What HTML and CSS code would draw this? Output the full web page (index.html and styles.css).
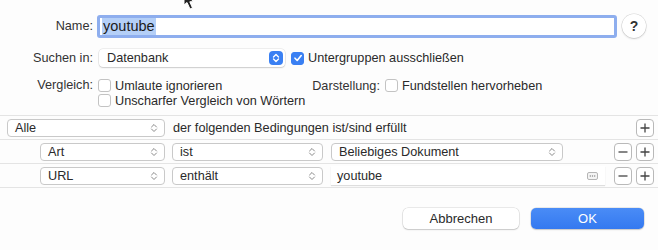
FILE: index.html
```html
<!DOCTYPE html>
<html lang="de">
<head>
  <meta charset="UTF-8" />
  <title>Intelligente Gruppe</title>
  <link rel="stylesheet" href="styles.css">
</head>
<body>
  <svg class="cursor" width="18" height="12" viewBox="0 0 18 12" aria-hidden="true">
    <path d="M2 -6 L2 5 L5 2.5 L8 9 L10.5 8 L7.8 1.8 L12 1.6 Z" fill="#222" stroke="#fff" stroke-width="1"/>
  </svg>

  <main class="sheet">
    <div class="form">
      <div class="row row-name">
        <span class="lbl">Name:</span>
        <div class="field focus"><span class="sel">youtube</span></div>
        <button class="help">?</button>
      </div>

      <div class="row row-scope">
        <span class="lbl">Suchen in:</span>
        <div class="popup popup-db">
          <span>Datenbank</span>
          <span class="stepper">
            <svg width="8" height="10" viewBox="0 0 8 10"><path d="M1.5 4 L4 1.5 L6.5 4 M1.5 6 L4 8.5 L6.5 6" fill="none" stroke="#fff" stroke-width="1.4" stroke-linecap="round" stroke-linejoin="round"/></svg>
          </span>
        </div>
        <label class="check">
          <span class="box on">
            <svg width="10" height="10" viewBox="0 0 10 10"><path d="M2 5.2 L4.2 7.5 L8.2 2.5" fill="none" stroke="#fff" stroke-width="1.6" stroke-linecap="round" stroke-linejoin="round"/></svg>
          </span>
          Untergruppen ausschließen
        </label>
      </div>

      <div class="row row-opts">
        <span class="lbl">Vergleich:</span>
        <div class="opts">
          <div class="opts-line">
            <label class="check"><span class="box"></span>Umlaute ignorieren</label>
            <span class="lbl-inline">Darstellung:</span>
            <label class="check"><span class="box"></span>Fundstellen hervorheben</label>
          </div>
          <label class="check"><span class="box"></span>Unscharfer Vergleich von Wörtern</label>
        </div>
      </div>
    </div>

    <section class="rules">
      <div class="rule">
        <div class="popup w-all"><span>Alle</span><svg class="chev" width="8" height="10" viewBox="0 0 8 10"><path d="M1.5 4 L4 1.5 L6.5 4 M1.5 6 L4 8.5 L6.5 6" fill="none" stroke="#8a8a8a" stroke-width="1" stroke-linecap="round" stroke-linejoin="round"/></svg></div>
        <span class="rule-text">der folgenden Bedingungen ist/sind erfüllt</span>
        <div class="tools">
          <button class="sq"><svg width="12" height="12" viewBox="0 0 12 12"><path d="M6 1.5 V10.5 M1.5 6 H10.5" stroke="#444" stroke-width="1.3"/></svg></button>
        </div>
      </div>

      <div class="rule nested">
        <div class="popup w-key"><span>Art</span><svg class="chev" width="8" height="10" viewBox="0 0 8 10"><path d="M1.5 4 L4 1.5 L6.5 4 M1.5 6 L4 8.5 L6.5 6" fill="none" stroke="#8a8a8a" stroke-width="1" stroke-linecap="round" stroke-linejoin="round"/></svg></div>
        <div class="popup w-op"><span>ist</span><svg class="chev" width="8" height="10" viewBox="0 0 8 10"><path d="M1.5 4 L4 1.5 L6.5 4 M1.5 6 L4 8.5 L6.5 6" fill="none" stroke="#8a8a8a" stroke-width="1" stroke-linecap="round" stroke-linejoin="round"/></svg></div>
        <div class="popup w-val"><span>Beliebiges Dokument</span><svg class="chev" width="8" height="10" viewBox="0 0 8 10"><path d="M1.5 4 L4 1.5 L6.5 4 M1.5 6 L4 8.5 L6.5 6" fill="none" stroke="#8a8a8a" stroke-width="1" stroke-linecap="round" stroke-linejoin="round"/></svg></div>
        <div class="tools">
          <button class="sq"><svg width="12" height="12" viewBox="0 0 12 12"><path d="M1.5 6 H10.5" stroke="#444" stroke-width="1.3"/></svg></button>
          <button class="sq"><svg width="12" height="12" viewBox="0 0 12 12"><path d="M6 1.5 V10.5 M1.5 6 H10.5" stroke="#444" stroke-width="1.3"/></svg></button>
        </div>
      </div>

      <div class="rule nested">
        <div class="popup w-key"><span>URL</span><svg class="chev" width="8" height="10" viewBox="0 0 8 10"><path d="M1.5 4 L4 1.5 L6.5 4 M1.5 6 L4 8.5 L6.5 6" fill="none" stroke="#8a8a8a" stroke-width="1" stroke-linecap="round" stroke-linejoin="round"/></svg></div>
        <div class="popup w-op"><span>enthält</span><svg class="chev" width="8" height="10" viewBox="0 0 8 10"><path d="M1.5 4 L4 1.5 L6.5 4 M1.5 6 L4 8.5 L6.5 6" fill="none" stroke="#8a8a8a" stroke-width="1" stroke-linecap="round" stroke-linejoin="round"/></svg></div>
        <div class="textbox">
          <span>youtube</span>
          <svg class="more" width="11" height="8" viewBox="0 0 11 8"><rect x="0.5" y="0.5" width="10" height="7" rx="1.5" fill="#f4f4f4" stroke="#b5b5b5"/><circle cx="3.3" cy="4" r="0.7" fill="#888"/><circle cx="5.5" cy="4" r="0.7" fill="#888"/><circle cx="7.7" cy="4" r="0.7" fill="#888"/></svg>
        </div>
        <div class="tools">
          <button class="sq"><svg width="12" height="12" viewBox="0 0 12 12"><path d="M1.5 6 H10.5" stroke="#444" stroke-width="1.3"/></svg></button>
          <button class="sq"><svg width="12" height="12" viewBox="0 0 12 12"><path d="M6 1.5 V10.5 M1.5 6 H10.5" stroke="#444" stroke-width="1.3"/></svg></button>
        </div>
      </div>
    </section>

    <div class="actions">
      <button class="btn">Abbrechen</button>
      <button class="btn primary">OK</button>
    </div>
  </main>
</body>
</html>
```

FILE: styles.css
```css
body {
  margin: 0;
  background: #fdfdfd;
  font-family: "Liberation Sans", Arial, sans-serif;
  font-size: 12.7px;
  color: #2a2a2a;
  width: 658px;
  height: 250px;
  overflow: hidden;
}
.cursor {
  position: absolute;
  top: 0;
  left: 182px;
}
.sheet {
  display: flex;
  flex-direction: column;
}
.form {
  padding-top: 14px;
  display: flex;
  flex-direction: column;
}
.row {
  display: flex;
  align-items: center;
}
.lbl {
  width: 93px;
  text-align: right;
  color: #333;
  flex: none;
}
/* Name */
.row-name {
  height: 24px;
}
.field {
  margin-left: 4px;
  width: 512px;
  height: 17px;
  background: #fff;
  display: flex;
  align-items: center;
  padding-left: 2px;
}
.field.focus {
  border: 3px solid #8eaeee;
  border-radius: 3px;
}
.sel {
  background: #b4cff7;
  font-size: 14.5px;
  line-height: 17px;
  padding: 0 1px 0 1px;
  color: #1b1b1b;
}
.help {
  margin-left: 5px;
  width: 24px;
  height: 24px;
  border-radius: 50%;
  border: none;
  background: #fff;
  box-shadow: 0 0 0 0.5px rgba(0,0,0,0.15), 0 1px 2px rgba(0,0,0,0.15);
  font-family: "Liberation Sans", Arial, sans-serif;
  font-size: 14px;
  font-weight: bold;
  color: #333;
  padding: 0;
}
/* Suchen in */
.row-scope {
  margin-top: 10px;
  height: 20px;
}
.popup {
  height: 18px;
  box-sizing: border-box;
  background: #fff;
  border: 1px solid #c9c9c9;
  border-radius: 4px;
  display: flex;
  align-items: center;
  justify-content: space-between;
  padding: 0 6px 0 7px;
  color: #2a2a2a;
  flex: none;
}
.popup-db {
  margin-left: 6px;
  width: 186px;
  border: none;
  box-shadow: 0 0 0 0.5px rgba(0,0,0,0.12), 0 1px 1.5px rgba(0,0,0,0.14);
  padding: 0 2px 0 8px;
}
.stepper {
  width: 14px;
  height: 14px;
  border-radius: 4px;
  background: #3a80f3;
  display: flex;
  align-items: center;
  justify-content: center;
}
.check {
  display: flex;
  align-items: center;
  gap: 4px;
  color: #2a2a2a;
  white-space: nowrap;
}
.box {
  width: 13px;
  height: 13px;
  box-sizing: border-box;
  border: 1px solid #c3c3c3;
  border-radius: 3px;
  background: #fff;
  display: flex;
  align-items: center;
  justify-content: center;
}
.box.on {
  background: #3a80f3;
  border-color: #3a80f3;
}
.row-scope .check {
  margin-left: 6px;
}
/* Vergleich */
.row-opts {
  margin-top: 10px;
  align-items: flex-start;
}
.row-opts .lbl {
  line-height: 15px;
}
.opts {
  margin-left: 5px;
  display: flex;
  flex-direction: column;
}
.opts .check {
  height: 15px;
}
.opts-line {
  display: flex;
  align-items: center;
}
.lbl-inline {
  margin-left: 90px;
  margin-right: 5px;
  color: #333;
}
/* Regeln */
.rules {
  margin-top: 7px;
  border-top: 1px solid #e4e4e4;
}
.rule {
  height: 23px;
  border-bottom: 1px solid #e4e4e4;
  display: flex;
  align-items: center;
  padding: 0 4px 0 7px;
  gap: 7px;
}
.rule.nested {
  padding-left: 40px;
}
.w-all { width: 158px; }
.w-key { width: 125px; }
.w-op { width: 151px; margin-left: 0; }
.w-val { width: 232px; margin-left: 1px; }
.chev {
  flex: none;
}
.rule-text {
  margin-left: 1px;
  color: #2a2a2a;
}
.textbox {
  margin-left: 1px;
  width: 274px;
  height: 19px;
  box-sizing: border-box;
  background: #fff;
  box-shadow: 0 1px 1px rgba(0,0,0,0.12);
  display: flex;
  align-items: center;
  justify-content: space-between;
  padding: 0 7px 0 6px;
}
.tools {
  margin-left: auto;
  display: flex;
  gap: 4px;
}
.sq {
  width: 18px;
  height: 18px;
  padding: 0;
  border: 1px solid #b9b9b9;
  border-radius: 4px;
  background: #fff;
  display: flex;
  align-items: center;
  justify-content: center;
}
/* Buttons */
.actions {
  display: flex;
  justify-content: flex-end;
  gap: 12px;
  padding: 20px 14px 0 0;
}
.btn {
  width: 116px;
  height: 21px;
  border: none;
  border-radius: 5px;
  background: #fff;
  box-shadow: 0 0 0 0.5px rgba(0,0,0,0.15), 0 1px 1.5px rgba(0,0,0,0.15);
  font-family: "Liberation Sans", Arial, sans-serif;
  font-size: 13px;
  color: #2a2a2a;
}
.btn.primary {
  width: 113px;
  background: linear-gradient(#4a8cf6, #3479f0);
  color: #fff;
}
```
